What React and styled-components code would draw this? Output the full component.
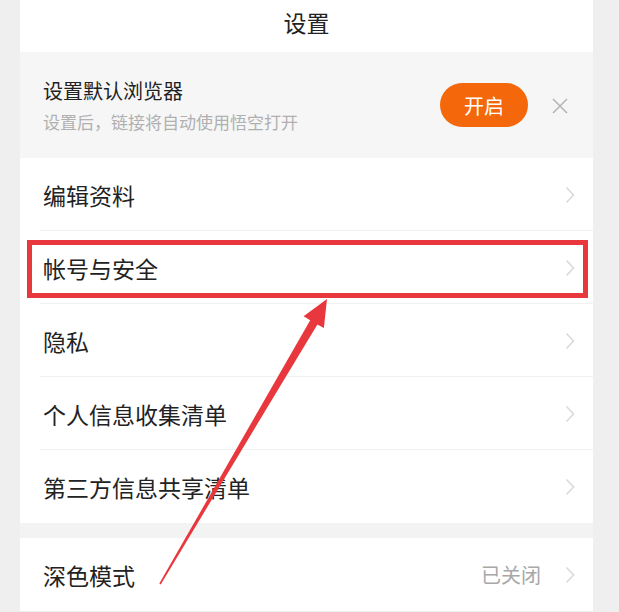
import React from 'react'
import styled, {createGlobalStyle} from 'styled-components'

const GlobalStyle = createGlobalStyle`
  html, body {
    margin: 0;
    padding: 0;
    background: #efefef;
  }
  body {
    font-family: "Noto Sans CJK SC", "Noto Sans", sans-serif;
    color: #222;
  }
`

const Page = styled.div`
  position: relative;
  width: 619px;
  height: 612px;
  overflow: hidden;
  padding-left: 20px;
  box-sizing: border-box;
`

const Panel = styled.div`
  width: 573px;
  background: #f3f3f3;
`

const Header = styled.div`
  height: 52px;
  background: #fff;
  display: flex;
  align-items: center;
  justify-content: center;
  padding-bottom: 9px;
  box-sizing: border-box;
  font-size: 23px;
  color: #222;
`

const Banner = styled.div`
  height: 106px;
  background: #f6f6f6;
  display: flex;
  align-items: center;
  padding: 0 23px;
  box-sizing: border-box;
`

const BannerText = styled.div`
  flex: 1;
  display: flex;
  flex-direction: column;
  gap: 6px;
`

const BannerTitle = styled.div`
  font-size: 20px;
  line-height: 26px;
  color: #222;
`

const BannerSub = styled.div`
  font-size: 17px;
  line-height: 23px;
  color: #b0b0b0;
`

const OpenButton = styled.button`
  width: 88px;
  height: 44px;
  border: none;
  border-radius: 22px;
  background: #f4680b;
  color: #fff;
  font-family: inherit;
  font-size: 20px;
  padding: 0;
  margin-right: 23px;
`

const Close = styled.svg`
  width: 18px;
  height: 18px;
  margin-top: 1px;
  margin-right: 1px;
`

const Group = styled.div`
  background: #fff;
  margin-bottom: ${p => p.$gap || 0}px;
`

const Row = styled.div`
  position: relative;
  height: 73px;
  display: flex;
  align-items: center;
  padding: 0 18px 0 23px;
  font-size: 23px;
  color: #222;

  &:not(:last-child)::after {
    content: '';
    position: absolute;
    left: 20px;
    right: 0;
    bottom: 0;
    height: 1px;
    background: #f2f2f2;
  }

  ${p => p.$marked && `
    &::before {
      content: '';
      position: absolute;
      top: 9px;
      left: 7px;
      right: 5px;
      bottom: 6px;
      border: 5px solid #e8383d;
      z-index: 2;
    }
  `}
`

const Label = styled.span`
  flex: 1;
`

const Value = styled.span`
  font-size: 20px;
  color: #a8a8a8;
  margin-right: 24px;
`

const Chevron = () => (
  <svg width="10" height="18" viewBox="0 0 10 18">
    <path d="M1.5 1.5 L8.5 9 L1.5 16.5" fill="none" stroke="#dadada" strokeWidth="1.6" />
  </svg>
)

const Arrow = styled.svg`
  position: absolute;
  left: 0;
  top: 0;
  width: 619px;
  height: 612px;
  pointer-events: none;
  z-index: 3;
`

const rows = ['编辑资料', '帐号与安全', '隐私', '个人信息收集清单', '第三方信息共享清单']

export default function App(){
  return(
    <Page>
      <GlobalStyle />
      <Panel>
        <Header>设置</Header>
        <Banner>
          <BannerText>
            <BannerTitle>设置默认浏览器</BannerTitle>
            <BannerSub>设置后，链接将自动使用悟空打开</BannerSub>
          </BannerText>
          <OpenButton>开启</OpenButton>
          <Close viewBox="0 0 18 18">
            <path d="M2 2 L16 16 M16 2 L2 16" stroke="#b4b4b4" strokeWidth="1.5" />
          </Close>
        </Banner>
        <Group $gap={15}>
          {rows.map(r => (
            <Row key={r} $marked={r === '帐号与安全'}>
              <Label>{r}</Label>
              <Chevron />
            </Row>
          ))}
        </Group>
        <Group>
          <Row>
            <Label>深色模式</Label>
            <Value>已关闭</Value>
            <Chevron />
          </Row>
        </Group>
      </Panel>
      <Arrow viewBox="0 0 619 612">
        <polygon
          fill="#e8383d"
          points="159.3,583.6 310.2,320.2 303.6,316.3 327,299 323.9,328.1 317.4,324.4 160.7,584.4"
        />
      </Arrow>
    </Page>
  )
}
